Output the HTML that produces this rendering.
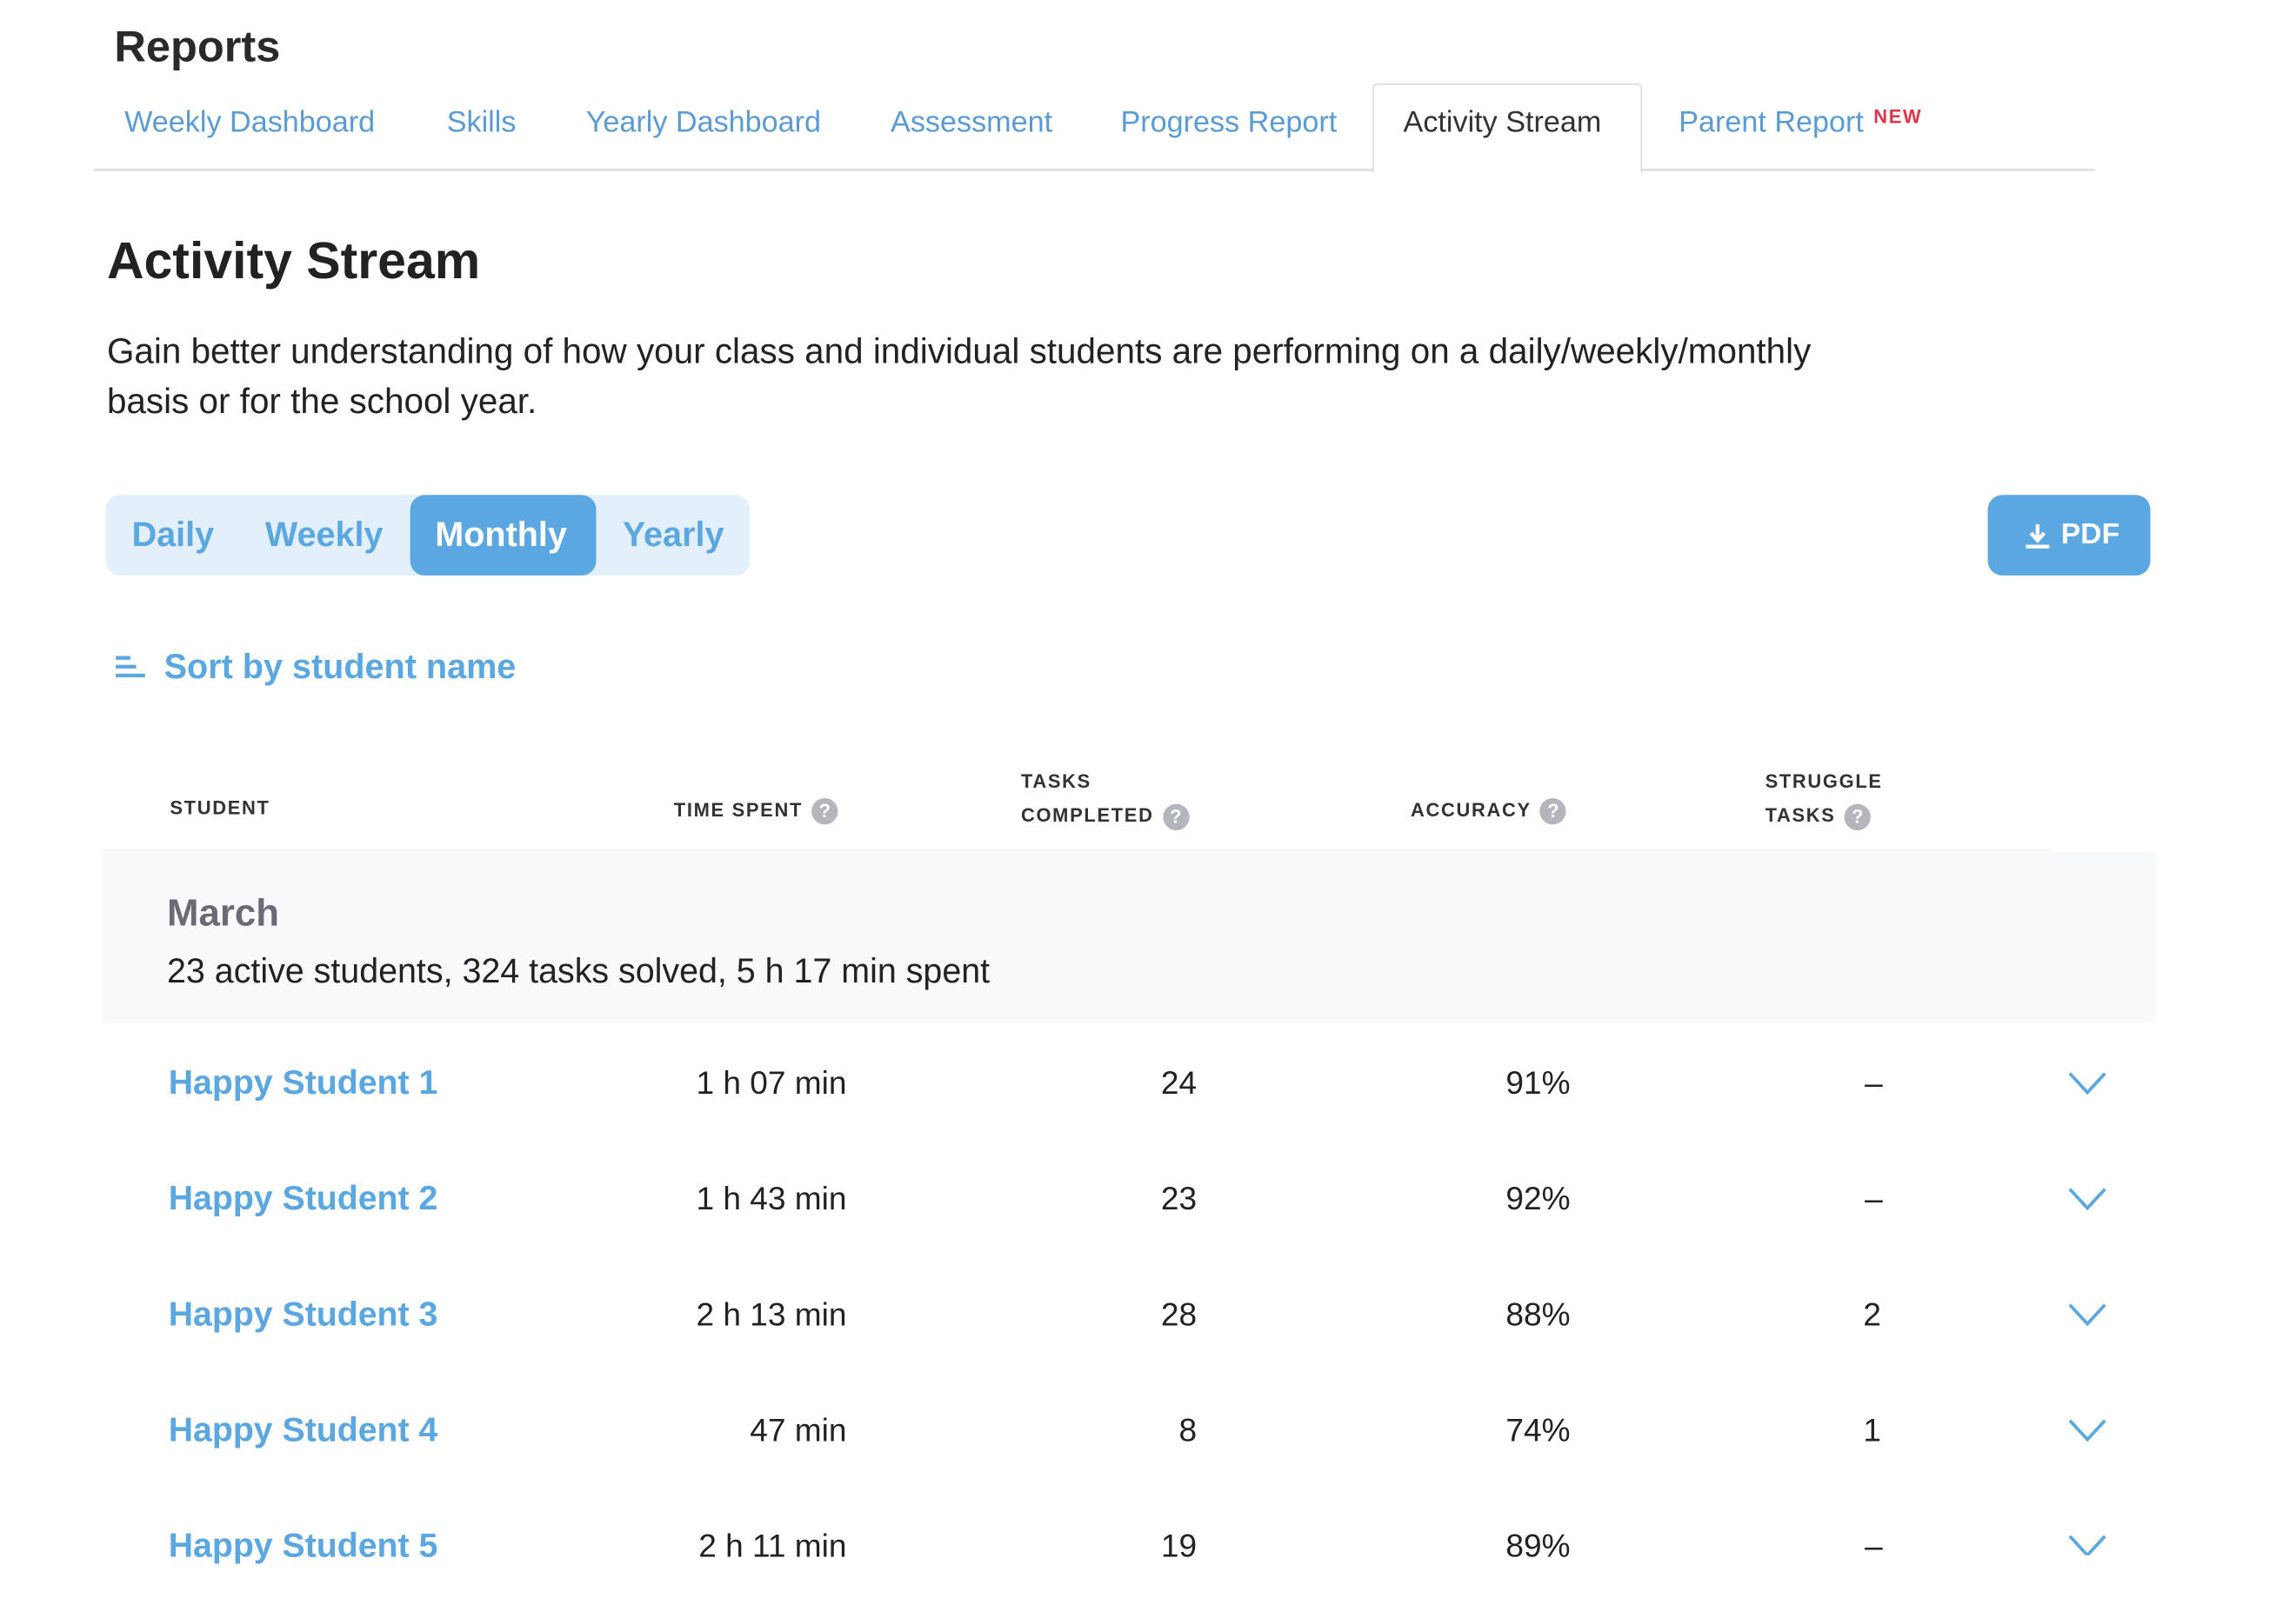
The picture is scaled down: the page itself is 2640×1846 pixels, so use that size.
<!DOCTYPE html>
<html><head><meta charset="utf-8"><style>
html,body{margin:0;padding:0;background:#fff;width:2640px;height:1845px;overflow:hidden}
#w,#r{position:absolute;left:0;top:0;width:1568px;height:1096px;transform:scale(1.6843);transform-origin:0 0;font-family:"Liberation Sans",sans-serif;color:#222}
.a{position:absolute;white-space:nowrap}
.tab{position:absolute;top:73px;font-size:20.3px;color:#5b9bd5}
.seg{font-size:23.5px;font-weight:bold;color:#5aa7e2;top:352px}
.h{font-size:13px;font-weight:bold;letter-spacing:1px;color:#333}
.q{display:inline-block;width:18px;height:18px;border-radius:50%;background:#b5b5be;color:#fff;font-size:13px;text-align:center;line-height:18px;vertical-align:middle;margin-left:6px;letter-spacing:0}
.nm{font-size:23.3px;font-weight:bold;color:#5aa7e2;left:115px}
.v{font-size:22px;color:#222;text-align:right}
</style></head><body><div id="w">
<div class="a" style="left:78px;top:16px;font-size:30px;font-weight:bold;color:#2a2a2a">Reports</div>
<div class="a" style="left:64px;top:115px;width:1366px;height:2px;background:#e2e2e2"></div>
<div class="a" style="left:937px;top:57px;width:182px;height:60px;border:1px solid #ddd;border-bottom:none;background:#fff;border-radius:3px 3px 0 0"></div>
<div class="tab" style="left:85px">Weekly Dashboard</div>
<div class="tab" style="left:305px">Skills</div>
<div class="tab" style="left:400px">Yearly Dashboard</div>
<div class="tab" style="left:608px">Assessment</div>
<div class="tab" style="left:765px">Progress Report</div>
<div class="tab" style="left:958px;color:#333">Activity Stream</div>
<div class="tab" style="left:1146px">Parent Report</div>
<div class="a" style="left:1279px;top:72px;font-size:13px;font-weight:bold;color:#e0344a;letter-spacing:1px">NEW</div>
<div class="a" style="left:73px;top:159px;font-size:35px;font-weight:bold;color:#222">Activity Stream</div>
<div class="a" style="left:73px;top:224px;font-size:24px;line-height:34px;color:#222;white-space:normal;width:1205px">Gain better understanding of how your class and individual students are performing on a daily/weekly/monthly basis or for the school year.</div>
<div class="a" style="left:72px;top:338px;width:440px;height:55px;background:#e3f0fb;border-radius:10px"></div>
<div class="a" style="left:280px;top:338px;width:127px;height:55px;background:#5aa7e2;border-radius:10px"></div>
<div class="a seg" style="left:90px">Daily</div>
<div class="a seg" style="left:181px">Weekly</div>
<div class="a seg" style="left:297px;color:#fff">Monthly</div>
<div class="a seg" style="left:425px">Yearly</div>
<div class="a" style="left:1357px;top:338px;width:111px;height:55px;background:#5aa7e2;border-radius:10px"></div>
<svg class="a" style="left:1382px;top:356px" width="18" height="20" viewBox="0 0 18 20"><path d="M9 2v10M4.5 8l4.5 5 4.5-5" stroke="#fff" stroke-width="2.6" fill="none"/><rect x="1" y="16" width="16" height="2.5" fill="#fff"/></svg>
<div class="a" style="left:1407px;top:354px;font-size:20px;font-weight:bold;color:#fff">PDF</div>
<svg class="a" style="left:79px;top:447px" width="21" height="18"><rect x="0" y="1" width="10" height="2.5" fill="#5aa7e2"/><rect x="0" y="7" width="14" height="2.5" fill="#5aa7e2"/><rect x="0" y="13" width="20" height="2.5" fill="#5aa7e2"/></svg>
<div class="a" style="left:112px;top:442px;font-size:23.5px;font-weight:bold;color:#5aa7e2">Sort by student name</div>
<div class="a h" style="left:116px;top:544px">STUDENT</div>
<div class="a h" style="left:460px;top:545px">TIME SPENT<span class="q">?</span></div>
<div class="a h" style="left:697px;top:522px;line-height:23px">TASKS<br>COMPLETED<span class="q">?</span></div>
<div class="a h" style="left:963px;top:545px">ACCURACY<span class="q">?</span></div>
<div class="a h" style="left:1205px;top:522px;line-height:23px">STRUGGLE<br>TASKS<span class="q">?</span></div>
<div class="a" style="left:70px;top:580px;width:1330px;height:1px;background:#eceef0"></div>
<div class="a" style="left:70px;top:582px;width:1402px;height:116px;background:#f8f9fa"></div>
<div class="a" style="left:114px;top:608px;font-size:26px;font-weight:bold;color:#6b6b78">March</div>
<div class="a" style="left:114px;top:650px;font-size:23.4px;color:#222">23 active students, 324 tasks solved, 5 h 17 min spent</div>
</div>
<div id="r">
<div class="a nm" style="top:726px">Happy Student 1</div><div class="a v" style="right:990px;top:727px">1 h 07 min</div><div class="a v" style="right:751px;top:727px">24</div><div class="a v" style="right:496px;top:727px">91%</div><div class="a v" style="left:1273px;top:727px">–</div>
<div class="a nm" style="top:805px">Happy Student 2</div><div class="a v" style="right:990px;top:806px">1 h 43 min</div><div class="a v" style="right:751px;top:806px">23</div><div class="a v" style="right:496px;top:806px">92%</div><div class="a v" style="left:1273px;top:806px">–</div>
<div class="a nm" style="top:884px">Happy Student 3</div><div class="a v" style="right:990px;top:885px">2 h 13 min</div><div class="a v" style="right:751px;top:885px">28</div><div class="a v" style="right:496px;top:885px">88%</div><div class="a v" style="left:1272px;top:885px">2</div>
<div class="a nm" style="top:963px">Happy Student 4</div><div class="a v" style="right:990px;top:964px">47 min</div><div class="a v" style="right:751px;top:964px">8</div><div class="a v" style="right:496px;top:964px">74%</div><div class="a v" style="left:1272px;top:964px">1</div>
<div class="a nm" style="top:1042px">Happy Student 5</div><div class="a v" style="right:990px;top:1043px">2 h 11 min</div><div class="a v" style="right:751px;top:1043px">19</div><div class="a v" style="right:496px;top:1043px">89%</div><div class="a v" style="left:1273px;top:1043px">–</div>
<svg class="a" style="left:1412px;top:732px" width="26" height="330"><g stroke="#5aa7e2" stroke-width="2.2" fill="none"><path d="M1 1l12 13 12-13"/><path d="M1 80l12 13 12-13"/><path d="M1 159l12 13 12-13"/><path d="M1 238l12 13 12-13"/><path d="M1 317l12 13 12-13"/></g></svg>
</div>
</body></html>
